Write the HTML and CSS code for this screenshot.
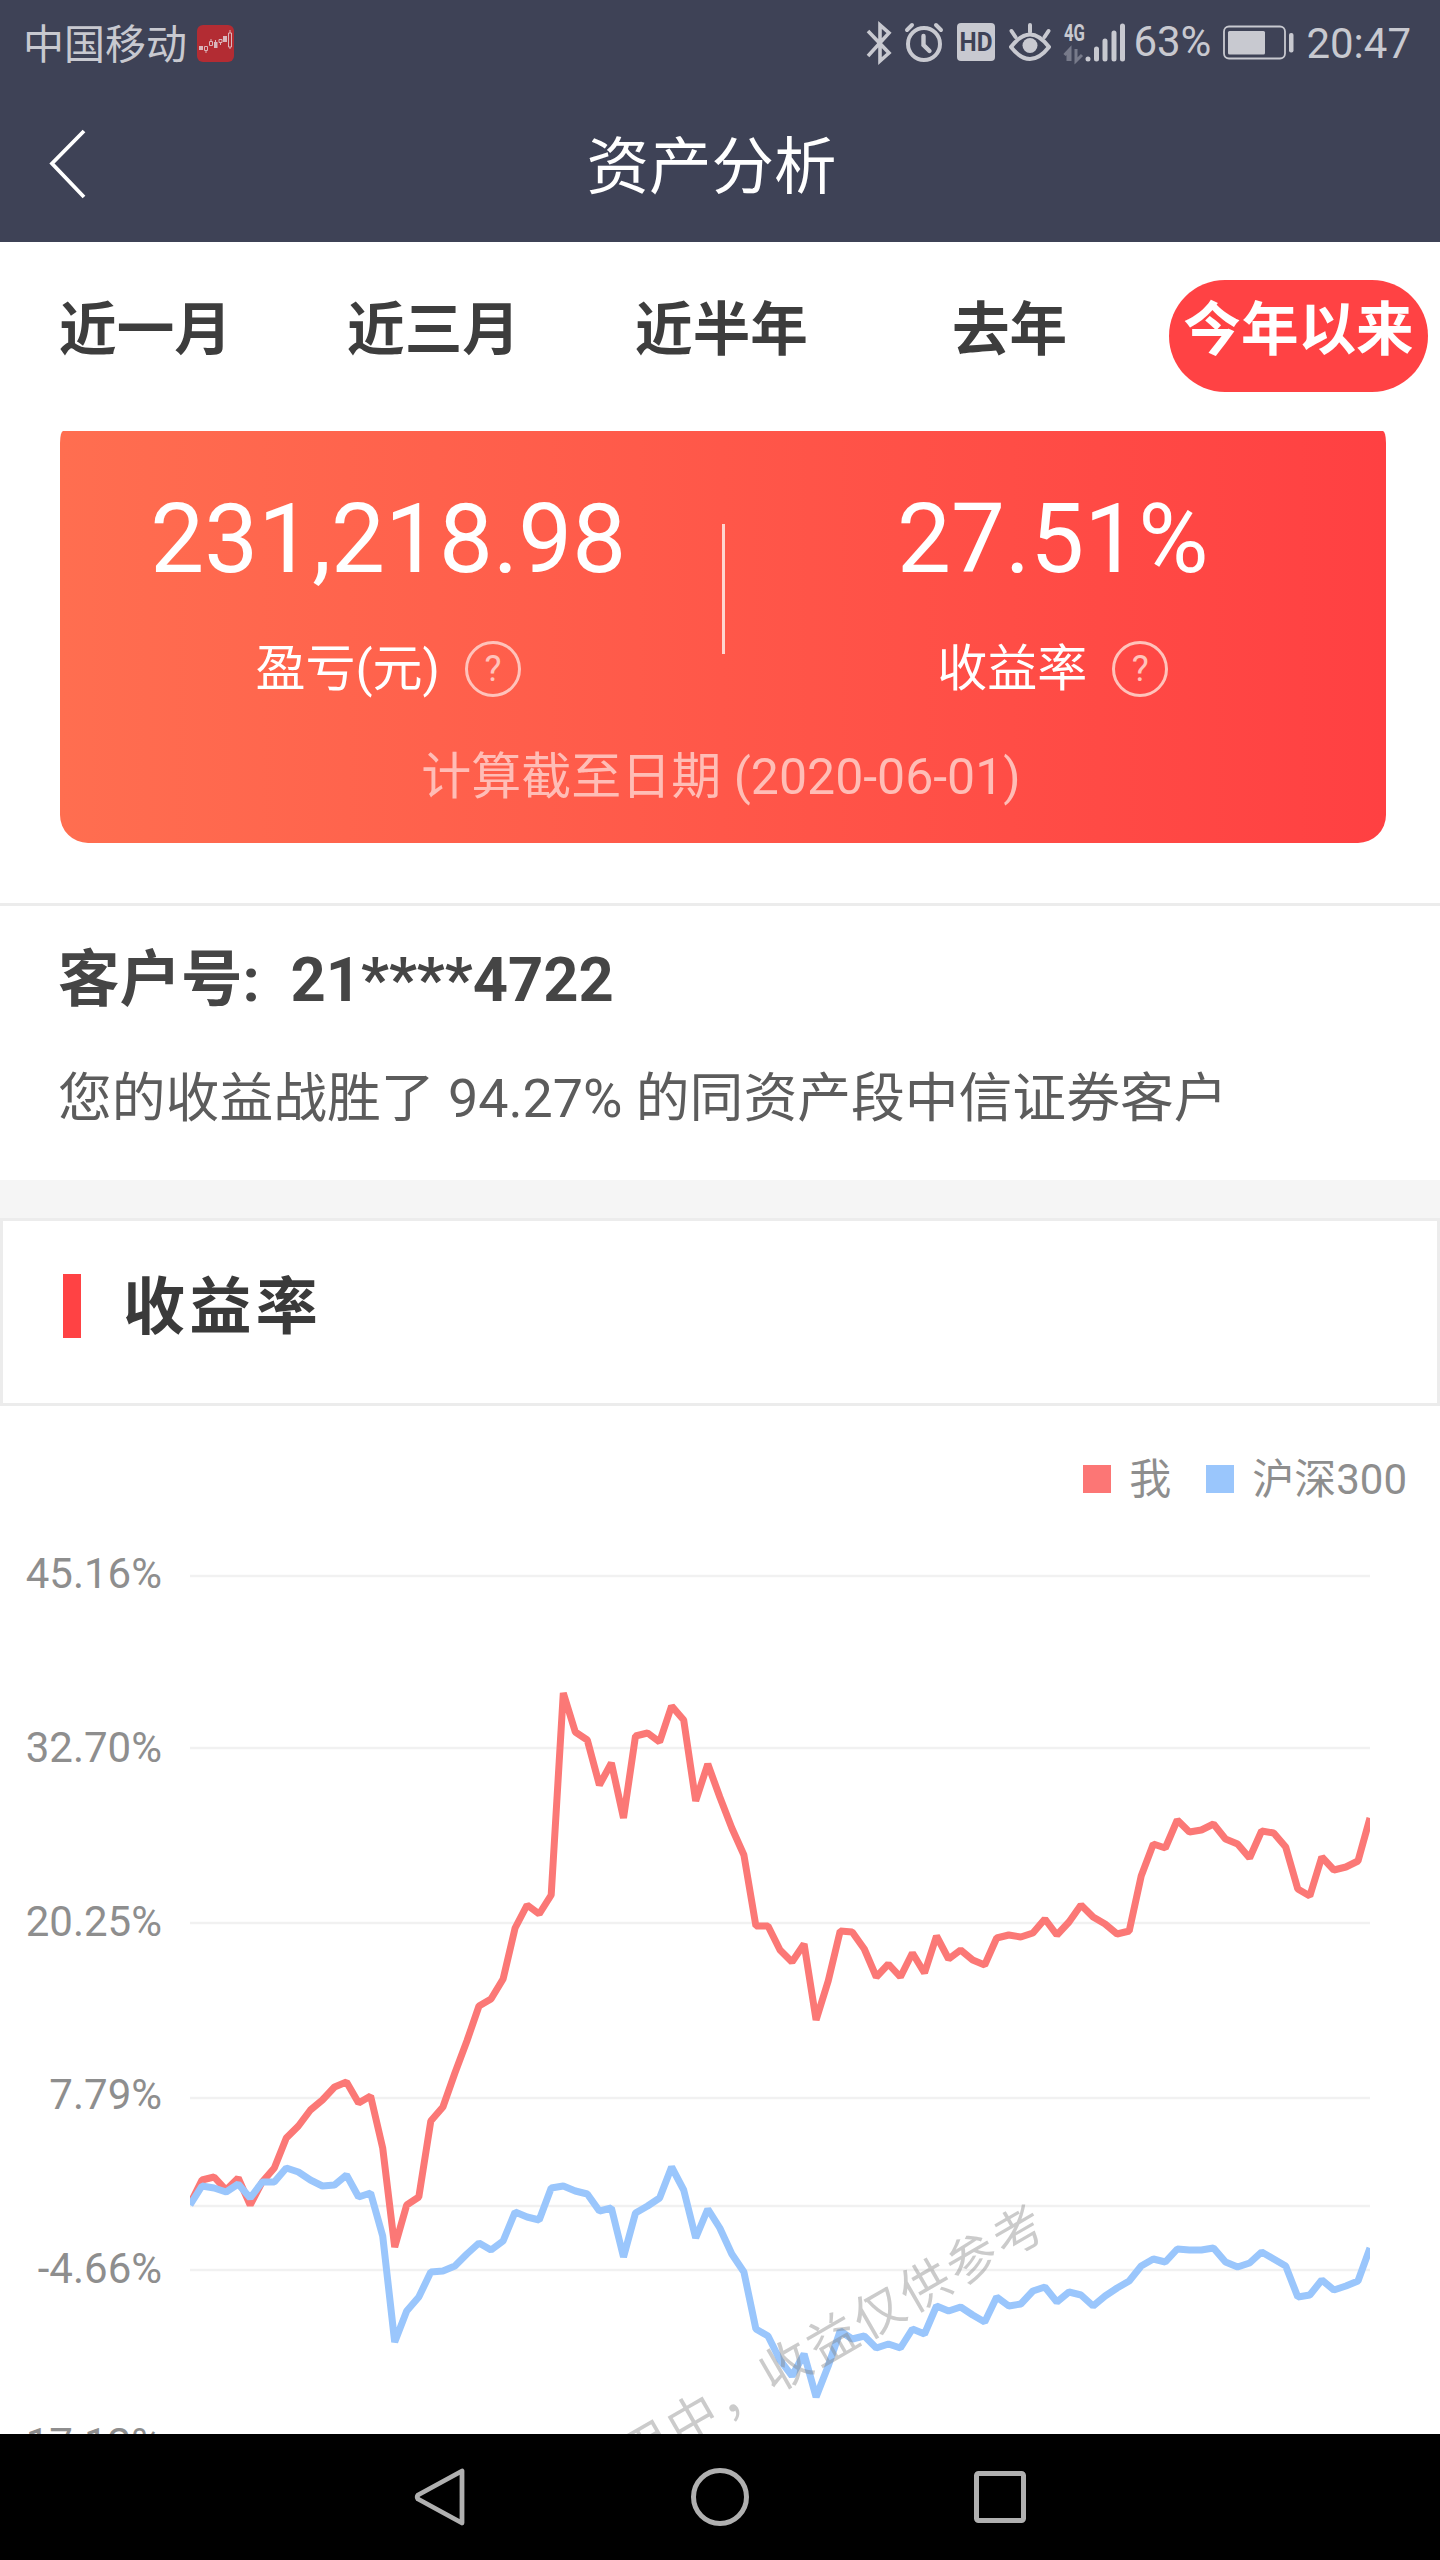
FILE: index.html
```
<!DOCTYPE html>
<html lang="zh-CN">
	<head>
		<meta charset="UTF-8">
		<title>资产分析</title>
		<link rel="stylesheet" href="styles.css">
		<script>
			window.onload=function(){
				//每个点的纵坐标，与svg的viewBox对应
				var me=[2204,2180,2177,2190,2178,2205,2182,2168,2138,2126,2110,2100,2087,2082,2103,2096,2148,2247,2205,2197,2121,2107,2073,2041,2006,
					1999,1979,1928,1905,1914,1895,1693,1732,1740,1785,1763,1818,1736,1733,1742,1706,1720,1801,1764,1797,1828,1855,1926,1926,1950,
					1962,1944,2020,1981,1931,1932,1949,1977,1964,1977,1953,1973,1936,1959,1950,1960,1965,1938,1935,1937,1933,1919,1935,1922,1905,
					1917,1924,1934,1931,1876,1844,1848,1820,1832,1830,1824,1839,1844,1858,1831,1833,1847,1889,1896,1857,1870,1867,1861,1818];
				var hs=[2205,2186,2188,2192,2184,2198,2182,2182,2168,2172,2180,2186,2185,2175,2197,2193,2236,2342,2311,2297,2272,2271,2266,2254,2243,
					2250,2241,2212,2217,2220,2188,2186,2191,2194,2211,2208,2257,2213,2206,2198,2167,2190,2238,2209,2228,2254,2272,2329,2336,2360,
					2376,2354,2397,2366,2331,2339,2336,2348,2344,2348,2329,2334,2306,2311,2307,2315,2322,2297,2306,2304,2291,2287,2302,2292,2295,
					2306,2296,2288,2281,2266,2259,2262,2249,2250,2250,2248,2262,2267,2263,2252,2259,2266,2297,2295,2280,2290,2286,2281,2248];

				draw("me",me);
				draw("hs",hs);

				function draw(id,arr){
					var step=1180/(arr.length-1);
					var points=arr.map(function(y,i){
						return (190+step*i).toFixed(1)+','+y;
					});
					document.getElementById(id).setAttribute("points",points.join(' '));
				}
			}
		</script>
	</head>
	<body>
		<div class="page">
			<div class="status">
				<span class="carrier">中国移动</span>
				<svg class="app" width="37" height="37" viewBox="0 0 37 37">
					<rect width="37" height="37" rx="6" fill="#b32c33"/>
					<g fill="#d9b6bb"><rect x="2" y="21" width="4" height="4"/><rect x="17" y="17" width="3.5" height="6"/><rect x="26" y="11" width="4" height="6"/></g>
					<g fill="none" stroke="#d9b6bb"><path d="M7.500 21.500h3v4h-3zM9 25v3M12.500 16.500h3v4h-3zM14 14v2M18.500 15v2M22 14.500h3v3h-3zM23.500 18v2M31.500 8h3v14h-3zM33 5v3M33 22v2"/></g>
				</svg>
				<div class="right">
					<svg class="bt" width="26" height="42" viewBox="0 0 26 42"><path d="M2 9L23 31L14 39V3L23 11L2 34" fill="none" stroke="#c8c9d0" stroke-width="3.600"/></svg>
					<svg class="alarm" width="38" height="40" viewBox="0 0 38 40"><g fill="none" stroke="#c8c9d0" stroke-linecap="round"><circle cx="19" cy="22" r="16" stroke-width="4"/><path d="M18.500 14v9l6 6" stroke-width="4.400"/><path d="M2 8l5-5M36 8l-5-5" stroke-width="4"/></g></svg>
					<svg class="hd" width="38" height="38" viewBox="0 0 38 38"><rect width="38" height="38" rx="4" fill="#c8c9d0"/><text x="19" y="28" text-anchor="middle" textLength="33" lengthAdjust="spacingAndGlyphs">HD</text></svg>
					<svg class="eye" width="42" height="38" viewBox="0 0 42 38"><g fill="none" stroke="#c8c9d0" stroke-width="4" stroke-linecap="round"><path d="M2 24Q21 -1 40 24Q21 48 2 24z" stroke-linejoin="round"/><path d="M21 9V2M6.500 14L2.500 8M35.500 14L39.500 8"/></g><circle cx="21" cy="22.500" r="7.500" fill="#c8c9d0"/></svg>
					<svg class="signal" width="62" height="40" viewBox="0 0 62 40">
						<text x="0" y="18" textLength="21" lengthAdjust="spacingAndGlyphs">4G</text>
						<path d="M4 38V28M0.500 32L6 26V38M12 26V38L18 32" fill="none" stroke="#777a8a" stroke-width="3"/>
						<path d="M24 36v0M32.500 36V26M41 36V18M50 36V10M58.500 36V3" stroke="#c8c9d0" stroke-width="5" stroke-linecap="round"/>
					</svg>
					<span class="percent">63%</span>
					<svg class="battery" width="72" height="36" viewBox="0 0 72 36"><rect x="1" y="1.500" width="61" height="32" rx="5" fill="none" stroke="#c8c9d0" stroke-width="1.800"/><rect x="5" y="6" width="37" height="23.500" rx="1.500" fill="#c8c9d0"/><rect x="66" y="8" width="4.500" height="19.500" rx="2" fill="#c8c9d0"/></svg>
					<span class="time">20:47</span>
				</div>
			</div>
			<div class="header">
				<svg class="back" width="40" height="72" viewBox="0 0 40 72"><path d="M36 2L4 34.500L36 68" fill="none" stroke="#fff" stroke-width="3.800"/></svg>
				<h1>资产分析</h1>
			</div>
			<ul class="tabs">
				<li>近一月</li>
				<li>近三月</li>
				<li>近半年</li>
				<li>去年</li>
				<li class="active"><span>今年以来</span></li>
			</ul>
			<div class="card">
				<div class="cols">
					<div class="col">
						<p class="num">231,218.98</p>
						<p class="label">盈亏(元)<i>?</i></p>
					</div>
					<div class="line"></div>
					<div class="col">
						<p class="num">27.51%</p>
						<p class="label">收益率<i>?</i></p>
					</div>
				</div>
				<p class="date">计算截至日期 (2020-06-01)</p>
			</div>
			<div class="user">
				<h2>客户号:&nbsp; 21****4722</h2>
				<p>您的收益战胜了 94.27% 的同资产段中信证券客户</p>
			</div>
			<div class="title"><h3>收益率</h3></div>
			<div class="chart">
				<div class="legend">
					<span class="red"></span>我
					<span class="blue"></span>沪深300
				</div>
				<svg class="plot" width="1440" height="914" viewBox="0 1520 1440 914">
					<path class="grid" d="M190 1576H1370M190 1748H1370M190 1923H1370M190 2098H1370M190 2206H1370M190 2270H1370"/>
					<g class="axis">
						<text x="162" y="1588">45.16%</text>
						<text x="162" y="1762">32.70%</text>
						<text x="162" y="1936">20.25%</text>
						<text x="162" y="2109">7.79%</text>
						<text x="162" y="2283">-4.66%</text>
						<text x="162" y="2458">-17.12%</text>
					</g>
					<clipPath id="area"><rect x="190" y="1560" width="1180" height="874"/></clipPath>
					<g class="series" clip-path="url(#area)">
						<polyline id="me" stroke="#fb7876"/>
						<polyline id="hs" stroke="#9ac6fc"/>
					</g>
					<text class="mark" transform="translate(1052 2233) rotate(-30)">用中，收益仅供参考</text>
				</svg>
			</div>
			<div class="nav">
				<svg width="60" height="64" viewBox="0 0 60 64"><path d="M52 6V58L8 34Q6.500 32 8 30z" fill="none" stroke="#b0b0b0" stroke-width="4.800" stroke-linejoin="round"/></svg>
				<svg width="60" height="64" viewBox="0 0 60 64"><circle cx="30" cy="32" r="26.500" fill="none" stroke="#b0b0b0" stroke-width="5"/></svg>
				<svg width="60" height="64" viewBox="0 0 60 64"><rect x="6.500" y="8.500" width="47" height="47" rx="2" fill="none" stroke="#b0b0b0" stroke-width="5"/></svg>
			</div>
		</div>
	</body>
</html>
```
FILE: styles.css
```
*{
	margin: 0;
	padding: 0;
	box-sizing: border-box;
}
body{
	font-family: Roboto,"Noto Sans CJK SC",sans-serif;
	background: #fff;
}
.page{
	width: 1440px;
	height: 2560px;
	overflow: hidden;
	display: flex;
	flex-direction: column;
}
/*状态栏*/
.status{
	height: 87px;
	background: #3e4256;
	color: #c8c9d0;
	display: flex;
	align-items: flex-start;
	padding: 22px 29px 0 23px;
	font-size: 41px;
	line-height: 42px;
}
.carrier{
	margin-top: 2px;
}
.app{
	margin: 3px 0 0 10px;
}
.right{
	margin-left: auto;
	display: flex;
	align-items: flex-start;
}
.right svg{
	overflow: visible;
}
.alarm{
	margin: 0 0 0 13px;
}
.hd{
	margin: 1px 0 0 14px;
}
.hd text{
	font: bold 25px Roboto,sans-serif;
	fill: #3e4256;
}
.eye{
	margin: 1px 0 0 14px;
}
.signal{
	margin: 1px 0 0 13px;
}
.signal text{
	font: bold 24px Roboto,sans-serif;
	fill: #c8c9d0;
}
.percent{
	margin: -1px 0 0 7px;
	width: 81px;
	font-size: 42px;
}
.battery{
	margin: 3px 0 0 9px;
}
.time{
	margin: 1px 0 0 11px;
	font-size: 42px;
}
/*标题栏*/
.header{
	height: 155px;
	background: #3e4256;
	color: #fff;
	display: flex;
	padding: 0 48px;
	align-items: center;
}
.header h1{
	flex: 1;
	margin: 0 57px 6px 0;
	text-align: center;
	font-size: 62.5px;
	font-weight: normal;
}
.tabs{
	height: 189px;
	display: flex;
	list-style: none;
	padding: 38px 0 0 0;
	font-size: 57.6px;
	font-weight: bold;
	color: #3d3d3d;
}
.tabs li{
	width: 288px;
	padding-left: 3px;
	text-align: center;
	line-height: 101px;
}
.tabs .active{
	display: flex;
	justify-content: center;
	padding-left: 5px;
	color: #fff;
}
.active span{
	width: 259px;
	height: 112px;
	border-radius: 56px;
	background: #ff4244;
}
/*收益卡片*/
.card{
	margin: 0 54px 60px 60px;
	height: 412px;
	border-radius: 3px 3px 28px 28px / 12px 12px 28px 28px;
	background: linear-gradient(to right,#ff6e50,#ff4042);
	color: #fff;
	text-align: center;
}
.cols{
	display: flex;
	padding-top: 52px;
}
.col{
	flex: 1;
	padding-right: 5px;
}
.num{
	font-size: 96px;
	line-height: 112px;
}
.label{
	margin-top: 40px;
	display: flex;
	justify-content: center;
	align-items: center;
	font-size: 50px;
	line-height: 68px;
}
.label i{
	width: 56px;
	height: 56px;
	margin-left: 25px;
	border: 3px solid #ffc3bb;
	border-radius: 50%;
	font-style: normal;
	font-size: 36px;
	line-height: 50px;
	color: #ffc3bb;
}
.line{
	width: 3px;
	height: 130px;
	margin-top: 41px;
	background: #ffd5cf;
}
.date{
	margin-top: 40px;
	padding-right: 4px;
	font-size: 50px;
	line-height: 68px;
	color: #ffbdb6;
}
.user{
	height: 277px;
	border-top: 3px solid #ececec;
	padding: 29px 58px 0;
}
.user h2{
	font-size: 61.5px;
	line-height: 90px;
	color: #454545;
}
.user p{
	margin-top: 34px;
	font-size: 53.8px;
	line-height: 80px;
	color: #5c5c5c;
}
.title{
	height: 226px;
	border-top: 38px solid #f5f5f5;
	display: flex;
}
.title h3{
	flex: 1;
	border: 3px solid #ececec;
	padding: 0 0 9px 60px;
	font-size: 62px;
	line-height: 80px;
	letter-spacing: 4.4px;
	color: #3a3a3a;
	display: flex;
	align-items: center;
}
.title h3:before{
	content: "";
	width: 18px;
	height: 64px;
	margin: 0 42px 4px 0;
	background: #ff4244;
}
.chart{
	height: 1028px;
}
.legend{
	height: 114px;
	padding: 24px 33px 0 0;
	display: flex;
	justify-content: flex-end;
	align-items: center;
	font-size: 42px;
	color: #8e8e8e;
}
.legend span{
	width: 28px;
	height: 28px;
	margin: 8px 18px 0 35px;
}
.legend .red{
	background: #fc7675;
}
.legend .blue{
	background: #9ac6fc;
}
.plot{
	display: block;
}
.grid{
	stroke: #f1f1f1;
	stroke-width: 2.5;
}
.axis text{
	font-size: 42px;
	fill: #8e8e8e;
	text-anchor: end;
}
.series polyline{
	fill: none;
	stroke-width: 7;
	stroke-linejoin: bevel;
}
.mark{
	font-size: 50px;
	letter-spacing: 3.7px;
	text-anchor: end;
	fill: rgba(130,130,130,0.42);
}
/*底部导航*/
.nav{
	height: 126px;
	background: #000;
	display: flex;
	justify-content: center;
	align-items: center;
	gap: 220px;
}
```
